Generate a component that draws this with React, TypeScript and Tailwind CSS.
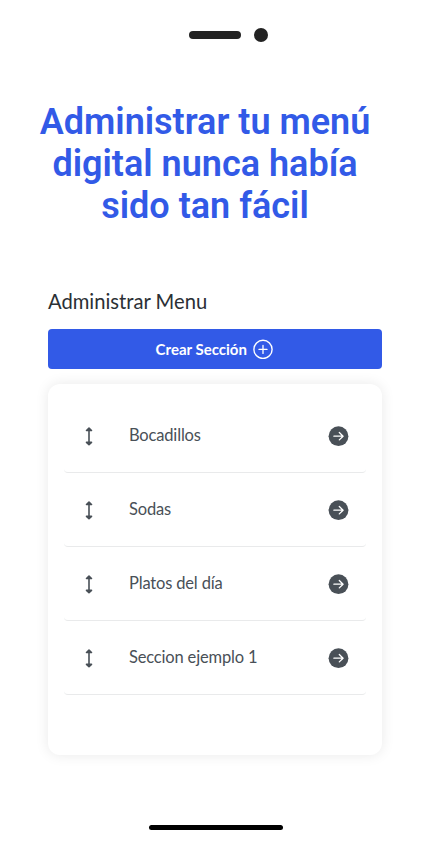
const sections = ["Bocadillos", "Sodas", "Platos del día", "Seccion ejemplo 1"];

function DragIcon() {
  return (
    <svg width="8" height="22" viewBox="0 0 8 22" fill="none">
      <path
        d="M4 3.7v15M1.5 5.5 4 3.1l2.5 2.4ZM1.5 17.3 4 19.7l2.5-2.4Z"
        stroke="currentColor"
        strokeWidth="1.6"
        strokeLinecap="round"
        strokeLinejoin="round"
      />
    </svg>
  );
}

function PlusCircle() {
  return (
    <svg width="20" height="20" viewBox="0 0 20 20" fill="none">
      <circle cx="10" cy="10.4" r="9.1" stroke="currentColor" strokeWidth="1.4" />
      <path d="M10 6.4v8M6 10.4h8" stroke="currentColor" strokeWidth="1.3" strokeLinecap="round" />
    </svg>
  );
}

function ArrowCircle() {
  return (
    <svg width="22" height="22" viewBox="0 0 22 22" fill="none">
      <circle cx="11.5" cy="11.2" r="9.9" fill="currentColor" />
      <path
        d="M6.9 11.2h9M12.3 7.5l3.8 3.7-3.8 3.7"
        stroke="white"
        strokeWidth="1.3"
        strokeLinecap="round"
        strokeLinejoin="round"
      />
    </svg>
  );
}

export default function App() {
  return (
    <div className="flex h-[864px] w-[431px] flex-col overflow-hidden bg-white font-['Lato',sans-serif]">
      <div className="flex items-center gap-[13px] pl-[189px] pt-7">
        <span className="h-2 w-[52px] rounded-full bg-[#232323]" />
        <span className="h-3.5 w-3.5 rounded-full bg-[#232323]" />
      </div>

      <h1 className="mt-[59px] w-[410px] text-center font-['Roboto',sans-serif] text-[36px] font-semibold leading-[42px] text-[#325ae7]">
        Administrar tu menú
        <br />
        digital nunca había
        <br />
        sido tan fácil
      </h1>

      <main className="ml-12 mt-[61px] w-[333.5px]">
        <h2 className="text-[20.2px] leading-[26px] text-[#2b3035]">Administrar Menu</h2>

        <button className="mt-[15px] flex h-10 w-full items-center justify-center gap-1.5 rounded bg-[#325ae7] pr-px text-[15px] font-bold text-white">
          Crear Sección
          <PlusCircle />
        </button>

        <div className="mt-[15px] h-[371px] rounded-xl bg-white px-4 pt-[15px] shadow-[0_0_14px_rgba(0,0,0,0.09)]">
          {sections.map((name) => (
            <div
              key={name}
              className="flex h-[74.1px] items-center rounded-[4px] border-b border-[#e9eaeb] pl-[21px] pr-[17px] text-[#495057]"
            >
              <DragIcon />
              <span className="-mt-px ml-9 flex-1 text-[16.5px] tracking-[-0.17px]">{name}</span>
              <ArrowCircle />
            </div>
          ))}
        </div>
      </main>

      <div className="ml-[149px] mt-[70px] h-[5px] w-[134px] rounded-full bg-black" />
    </div>
  );
}
